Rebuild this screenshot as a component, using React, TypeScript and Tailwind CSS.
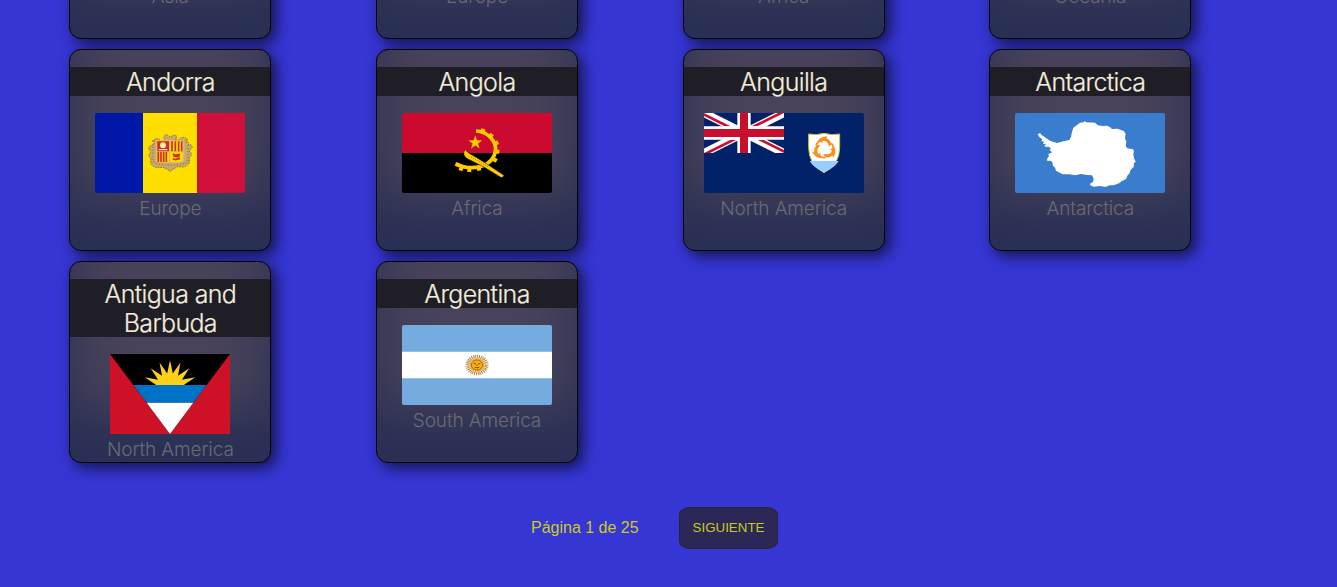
import React from "react";

const point = (cx: number, cy: number, r: number, deg: number) => {
  const a = (deg * Math.PI) / 180;
  return `${(cx + r * Math.cos(a)).toFixed(1)},${(cy + r * Math.sin(a)).toFixed(1)}`;
};

const star = (cx: number, cy: number, outer: number, inner: number, n: number) =>
  Array.from({ length: n * 2 }, (_, i) => point(cx, cy, i % 2 ? inner : outer, -90 + (i * 180) / n)).join(" ");

type FlagProps = { width: number; children: React.ReactNode; rounded?: boolean };

// Flags are drawn in units of a third of a pixel.
function Flag({ width, children, rounded = true }: FlagProps) {
  return (
    <svg
      className={rounded ? "block h-20 shrink-0 rounded-[2px]" : "block h-20 shrink-0"}
      width={width}
      height={80}
      viewBox={`0 0 ${width * 3} 240`}
    >
      {children}
    </svg>
  );
}

function Andorra() {
  return (
    <Flag width={150}>
      <path fill="#0018a8" d="M0 0h144v240H0z" />
      <path fill="#fedf00" d="M144 0h162v240H144z" />
      <path fill="#d0103a" d="M306 0h144v240H306z" />
      <path
        fill="#c7a96c"
        stroke="#8f713c"
        strokeWidth="3"
        strokeDasharray="5 3"
        d="M207 70q6-8 14-2l5 5 6-5q9-4 14 3l-5 9 9 1 8-7q14-3 19 5l-3 9 5 6q11-1 13 9l-6 7-3 6q9 4 6 12l-6 6q3 12-2 19-8 9-20 9l-14-1-10 6-12 8-10-7-11-5-14 1q-15-1-22-11-3-8 1-17-9-3-7-11l6-9-7-8q-1-10 12-11l5-4-3-10q6-9 18-4l6 6 9-1z"
      />
      <path fill="none" stroke="#a78749" strokeWidth="5" strokeDasharray="4 5" d="M174 84h105v60q-4 12-54 12-46 0-51-12z" />
      <path fill="#d9b969" d="M182 81h86v62q-2 8-43 8-42 0-43-8z" />
      <path fill="#d52b1e" d="M187 85h35v30h-35z" />
      <circle cx="204" cy="97" r="9" fill="#fff3a0" />
      <path stroke="#eedbc5" strokeWidth="4" d="M191 110h26" />
      <path fill="#fedf00" d="M226 85h37v30h-37zM187 117h35v30h-35zM226 117h37v27q-6 3-37 3z" />
      <path stroke="#d52b1e" strokeWidth="5" d="M231 85v30M241 85v30M251 85v30M260 85v30M190 117v30M198 117v30M206 117v30M214 117v30" />
      <path stroke="#d52b1e" strokeWidth="5" fill="none" d="M233 123l9 4 13-3M235 129l10 2 9-1M233 137l9 3 13-4" />
    </Flag>
  );
}

function Angola() {
  const cogs = [
    [243, 53, 12],
    [267, 68, 38],
    [283, 90, 65],
    [286, 116, 92],
    [279, 141, 122],
    [231, 167, 172],
    [202, 171, 184],
    [177, 167, 198],
    [166, 155, 200],
  ];
  return (
    <Flag width={150}>
      <path fill="#cc092f" d="M0 0h450v120H0z" />
      <path d="M0 120h450v120H0z" />
      <path
        fill="none"
        stroke="#ffcb00"
        strokeWidth="11"
        d="M222 54C258 55 285 86 280 115C275 143 250 164 209 164C190 164 178 161 165 154"
      />
      {cogs.map(([x, y, a]) => (
        <path key={a} fill="#ffcb00" d="M-6-6h12v12H-6z" transform={`translate(${x} ${y}) rotate(${a})`} />
      ))}
      <path stroke="#000" strokeWidth="1.5" fill="#ffcb00" d="M189 109q-10 18 7 28l48 24 52 32q7 3 10-6l-57-38-33-20q-22-11-27-20z" />
      <path stroke="#6b5500" strokeWidth="2" strokeDasharray="3 4" d="M207 131l54 32" />
      <polygon fill="#ffcb00" points={star(220, 89, 22, 8.5, 5)} />
    </Flag>
  );
}

function Anguilla() {
  const dolphin = "M-21-17q8-15 22-16l7-2-2 6q11 5 13 16l-5 8-5-11q-7-8-15-5l2 6-8-4q-6 3-8 10l-5-1 2-5z";
  return (
    <Flag width={160}>
      <path fill="#012169" d="M0 0h480v240H0z" />
      <svg x="0" y="0" width="240" height="120" viewBox="0 0 240 120">
        <path stroke="#fff" strokeWidth="24" d="M0 0l240 120M240 0L0 120" />
        <path
          fill="#c8102e"
          d="M0 0l80 40H62L0 9zM240 0l-80 40h-18l80-40zM240 120l-80-40h18l62 31zM0 120l80-40h18l-80 40z"
        />
        <path stroke="#fff" strokeWidth="40" d="M120 0v120M0 60h240" />
        <path stroke="#c8102e" strokeWidth="24" d="M120 0v120M0 60h240" />
      </svg>
      <path fill="#fff" stroke="#c9c735" strokeWidth="3" d="M314 63q22 5 46-2 24 7 47 2v40q0 52-47 76-46-24-46-76z" />
      <path fill="#9cf" d="M317 144h87q-11 21-44 33-32-12-43-33z" />
      <g fill="#ff8d19">
        <path transform="translate(361 107) scale(1.08)" d={dolphin} />
        <path transform="translate(361 107) scale(1.08) rotate(120)" d={dolphin} />
        <path transform="translate(361 107) scale(1.08) rotate(240)" d={dolphin} />
      </g>
    </Flag>
  );
}

function Antarctica() {
  return (
    <Flag width={150}>
      <path fill="#3a7dce" d="M0 0h450v240H0z" />
      <path
        fill="#fff"
        d="M68 64L75 60 79 65 93 75 106 84 127 90 145 85 163 81 168 72 170 61 175 44 187 35 195 29 207 28 208 24 214 28 240 29 249 37 263 39 277 38 288 44 290 48 308 47 326 54 332 62 330 75 334 86 332 100 337 106 354 109 357 115 355 123 357 136 362 146 357 150 356 162 347 170 344 180 337 188 333 198 321 204 312 211 296 217 283 217 272 222 255 219 236 221 226 217 225 212 234 207 236 197 231 187 217 186 198 183 181 187 163 184 143 184 131 178 123 173 120 164 114 158 112 147 106 143 97 144 96 138 102 129 100 124 111 118 104 111 108 105 99 101 92 102 88 98 94 92 84 93 87 86 79 84 82 79 73 72z"
      />
    </Flag>
  );
}

function Antigua() {
  const rays = Array.from({ length: 17 }, (_, i) =>
    point(180, 101, i % 2 ? 43 : 82, 180 + i * 11.25)
  ).join(" ");
  return (
    <Flag width={120} rounded={false}>
      <path fill="#ce1126" d="M0 0h360v240H0z" />
      <path d="M0 0h360L180 240z" />
      <svg x="0" y="0" width="360" height="94" viewBox="0 0 360 94">
        <polygon fill="#fcd116" points={rays} />
      </svg>
      <path fill="#0072c6" d="M70 93h220l-40 53H110z" />
      <path fill="#fff" d="M110 146h140l-70 94z" />
    </Flag>
  );
}

function Argentina() {
  return (
    <Flag width={150}>
      <path fill="#74acdf" d="M0 0h450v240H0z" />
      <path fill="#fff" d="M0 80h450v80H0z" />
      <g transform="translate(225 120) scale(1.13 1)">
        <polygon fill="#e4a84e" points={star(0, 0, 34, 17, 24)} />
        <circle r="26" fill="none" stroke="#9c5c1c" strokeWidth="9" strokeDasharray="1.6 3.5" />
        <circle r="15" fill="#f6b40e" stroke="#9a5213" strokeWidth="2" />
        <path stroke="#85340a" strokeWidth="2.5" fill="none" d="M-9-4h6M3-4h6M0-2v5M-6 7q6 3 12 0" />
      </g>
    </Flag>
  );
}

type Country = { name?: string; region: string; flag?: React.ReactNode };

const countries: Country[] = [
  { region: "Asia" },
  { region: "Europe" },
  { region: "Africa" },
  { region: "Oceania" },
  { name: "Andorra", region: "Europe", flag: <Andorra /> },
  { name: "Angola", region: "Africa", flag: <Angola /> },
  { name: "Anguilla", region: "North America", flag: <Anguilla /> },
  { name: "Antarctica", region: "Antarctica", flag: <Antarctica /> },
  { name: "Antigua and Barbuda", region: "North America", flag: <Antigua /> },
  { name: "Argentina", region: "South America", flag: <Argentina /> },
];

function Card({ name, region, flag }: Country) {
  return (
    <article className="flex h-[202px] w-[202px] flex-col items-center overflow-hidden rounded-xl border border-black bg-[#48425a] pt-[17px] shadow-[5px_5px_15px_rgba(0,0,0,0.65),inset_0_-50px_50px_#293055]">
      <h2 className="mb-[17px] min-h-[29px] w-full shrink-0 bg-[#1f1e27] px-5 text-center font-['Inter',sans-serif] text-[25px] leading-[29px] font-light tracking-[-0.65px] text-[#f3ecdc] [-webkit-text-stroke:0.2px_#f3ecdc]">
        <span className="block translate-y-px">{name}</span>
      </h2>
      {flag ?? <div className="h-20 w-[150px] shrink-0" />}
      <p className="mt-1 font-['Inter',sans-serif] text-[19px] leading-6 font-light tracking-[-0.1px] text-[#6b6b72]">{region}</p>
    </article>
  );
}

export default function App() {
  return (
    <main className="h-[587px] overflow-hidden bg-[#3636d5]">
      <section className="-mt-[163px] ml-[17px] grid w-[1226.67px] grid-cols-4 justify-items-center gap-y-2.5">
        {countries.map((c, i) => (
          <Card key={i} {...c} />
        ))}
      </section>
      <nav className="mt-11 ml-[531px] flex items-center gap-[41px] font-['Liberation_Sans',sans-serif] text-[#cccc16]">
        <span className="w-[107px] text-base leading-6 whitespace-nowrap">Página 1 de 25</span>
        <button className="h-[42px] w-[99px] rounded-[12px/8px] border border-[#252534] bg-[#2b2857] text-[13.33px] leading-none">
          SIGUIENTE
        </button>
      </nav>
    </main>
  );
}
